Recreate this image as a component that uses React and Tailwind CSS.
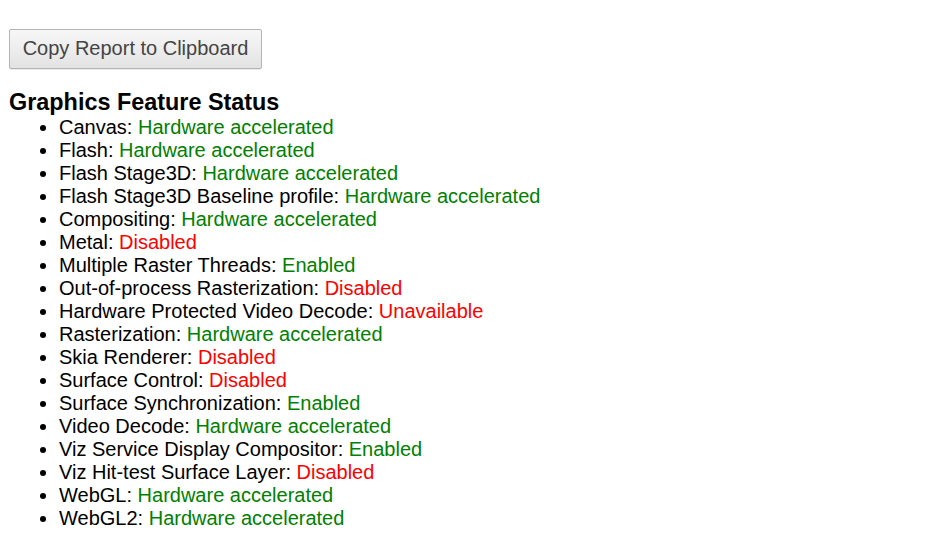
const features = [
  ['Canvas', 'Hardware accelerated', true],
  ['Flash', 'Hardware accelerated', true],
  ['Flash Stage3D', 'Hardware accelerated', true],
  ['Flash Stage3D Baseline profile', 'Hardware accelerated', true],
  ['Compositing', 'Hardware accelerated', true],
  ['Metal', 'Disabled', false],
  ['Multiple Raster Threads', 'Enabled', true],
  ['Out-of-process Rasterization', 'Disabled', false],
  ['Hardware Protected Video Decode', 'Unavailable', false],
  ['Rasterization', 'Hardware accelerated', true],
  ['Skia Renderer', 'Disabled', false],
  ['Surface Control', 'Disabled', false],
  ['Surface Synchronization', 'Enabled', true],
  ['Video Decode', 'Hardware accelerated', true],
  ['Viz Service Display Compositor', 'Enabled', true],
  ['Viz Hit-test Surface Layer', 'Disabled', false],
  ['WebGL', 'Hardware accelerated', true],
  ['WebGL2', 'Hardware accelerated', true],
];

export default function App() {
  return (
    <div className="bg-white w-[929px] h-[548px] pl-[9px] pt-[29px] text-black" style={{ fontFamily: '"Liberation Sans", Arial, sans-serif' }}>
      <button className="h-[40px] w-[253px] pb-[2px] rounded-[2px] border border-[#b4b4b4] bg-gradient-to-b from-[#f7f7f7] to-[#e3e3e3] text-[20px] text-[#444] shadow-[0_1px_0_rgba(0,0,0,0.08)]">
        Copy Report to Clipboard
      </button>

      <h3 className="mt-[21px] text-[23.4px] font-bold leading-[25px]">Graphics Feature Status</h3>
      <ul className="mt-[1px] pl-[50px] text-[20px] leading-[23px] list-disc">
        {features.map(([name, status, ok]) => (
          <li key={name}>
            {name}: <span className={ok ? 'text-[#008000]' : 'text-[#ff0000]'}>{status}</span>
          </li>
        ))}
      </ul>
    </div>
  );
}
